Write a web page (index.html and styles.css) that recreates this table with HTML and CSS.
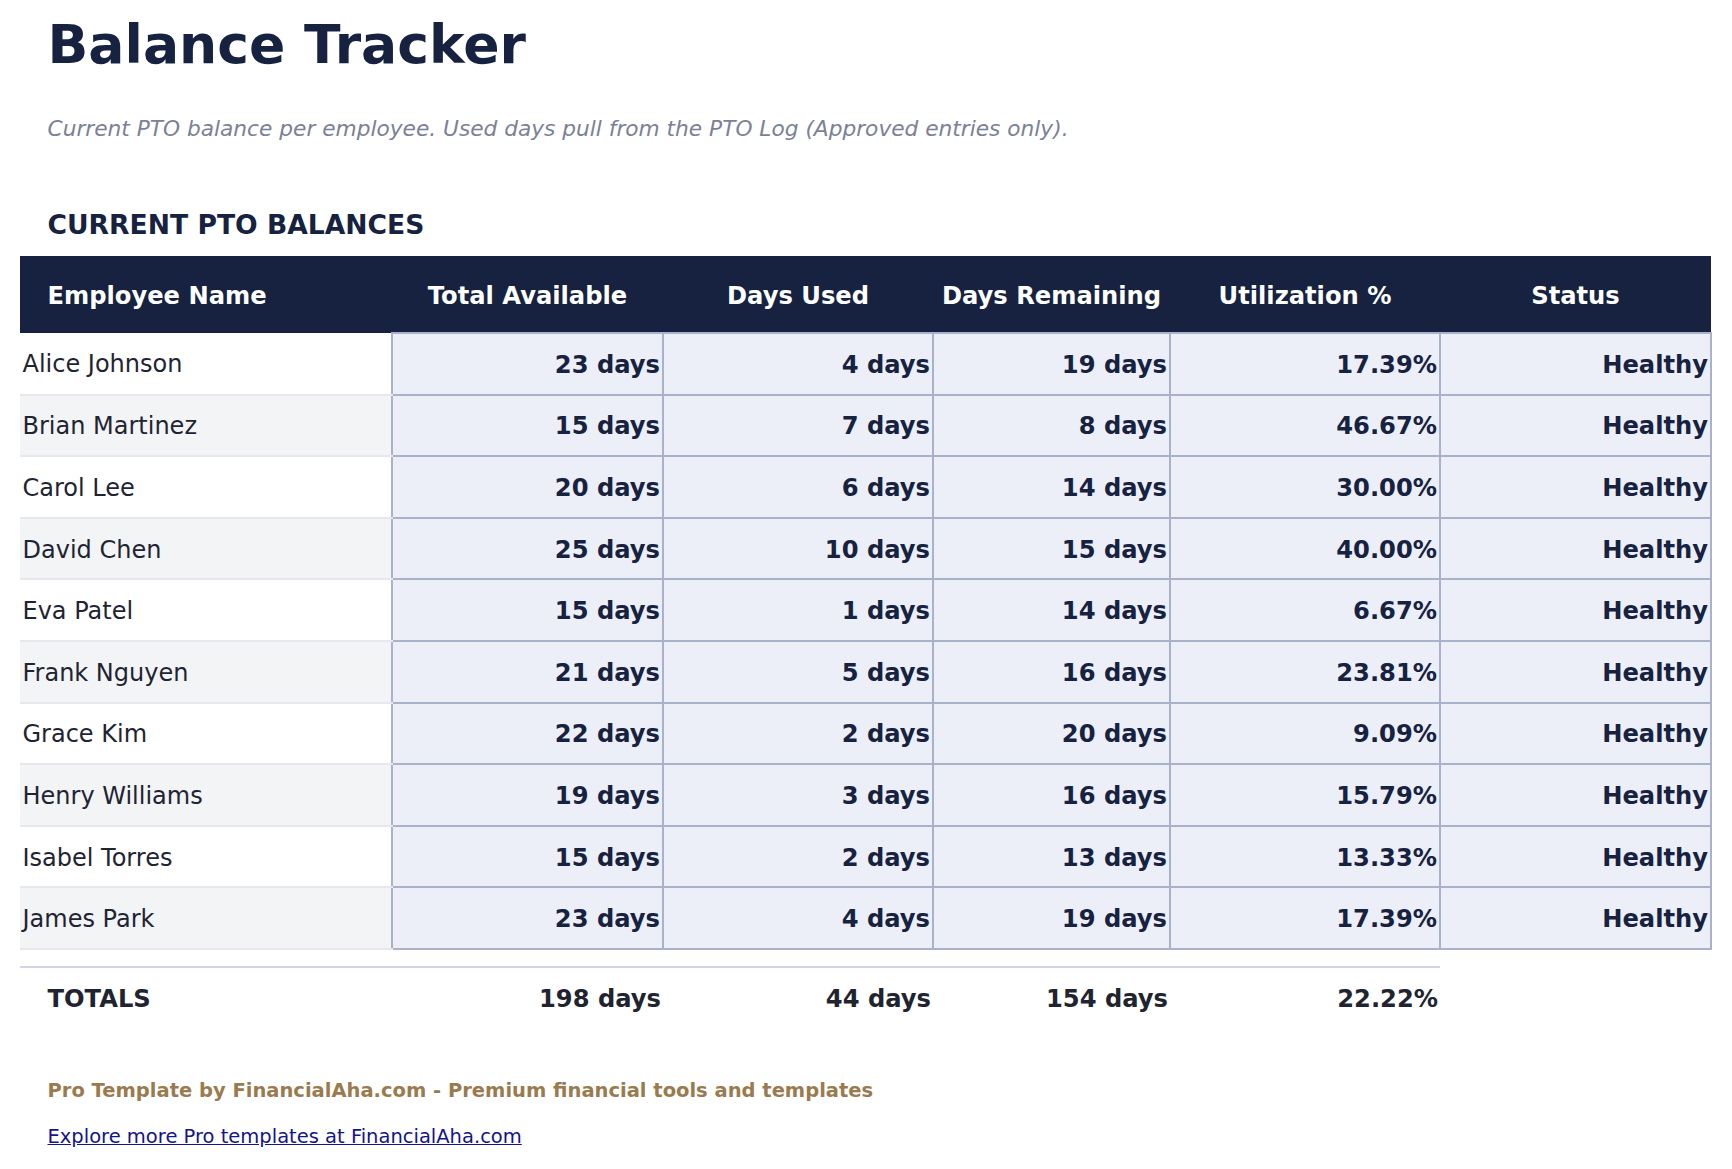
FILE: index.html
```html
<!DOCTYPE html>
<html lang="en">
<head>
<meta charset="utf-8">
<title>Balance Tracker</title>
<link rel="stylesheet" href="styles.css">
</head>
<body>
<div class="page">
  <h1 class="title">Balance Tracker</h1>
  <p class="subtitle">Current PTO balance per employee. Used days pull from the PTO Log (Approved entries only).</p>
  <h2 class="section">CURRENT PTO BALANCES</h2>
  <table class="grid">
    <colgroup>
      <col class="c-name"><col class="c-total"><col class="c-used"><col class="c-rem"><col class="c-util"><col class="c-status">
    </colgroup>
    <thead>
      <tr class="head">
        <th class="h-name">Employee Name</th>
        <th>Total Available</th>
        <th>Days Used</th>
        <th>Days Remaining</th>
        <th>Utilization %</th>
        <th>Status</th>
      </tr>
    </thead>
    <tbody>
      <tr class="row"><td class="name">Alice Johnson</td><td class="num">23 days</td><td class="num">4 days</td><td class="num">19 days</td><td class="num">17.39%</td><td class="num">Healthy</td></tr>
      <tr class="row alt"><td class="name">Brian Martinez</td><td class="num">15 days</td><td class="num">7 days</td><td class="num">8 days</td><td class="num">46.67%</td><td class="num">Healthy</td></tr>
      <tr class="row"><td class="name">Carol Lee</td><td class="num">20 days</td><td class="num">6 days</td><td class="num">14 days</td><td class="num">30.00%</td><td class="num">Healthy</td></tr>
      <tr class="row alt"><td class="name">David Chen</td><td class="num">25 days</td><td class="num">10 days</td><td class="num">15 days</td><td class="num">40.00%</td><td class="num">Healthy</td></tr>
      <tr class="row"><td class="name">Eva Patel</td><td class="num">15 days</td><td class="num">1 days</td><td class="num">14 days</td><td class="num">6.67%</td><td class="num">Healthy</td></tr>
      <tr class="row alt"><td class="name">Frank Nguyen</td><td class="num">21 days</td><td class="num">5 days</td><td class="num">16 days</td><td class="num">23.81%</td><td class="num">Healthy</td></tr>
      <tr class="row"><td class="name">Grace Kim</td><td class="num">22 days</td><td class="num">2 days</td><td class="num">20 days</td><td class="num">9.09%</td><td class="num">Healthy</td></tr>
      <tr class="row alt"><td class="name">Henry Williams</td><td class="num">19 days</td><td class="num">3 days</td><td class="num">16 days</td><td class="num">15.79%</td><td class="num">Healthy</td></tr>
      <tr class="row"><td class="name">Isabel Torres</td><td class="num">15 days</td><td class="num">2 days</td><td class="num">13 days</td><td class="num">13.33%</td><td class="num">Healthy</td></tr>
      <tr class="row alt"><td class="name">James Park</td><td class="num">23 days</td><td class="num">4 days</td><td class="num">19 days</td><td class="num">17.39%</td><td class="num">Healthy</td></tr>
    </tbody>
    <tfoot>
      <tr class="spacer"><td colspan="6"></td></tr>
      <tr class="totals">
        <td class="t-label">TOTALS</td>
        <td class="t-num">198 days</td>
        <td class="t-num">44 days</td>
        <td class="t-num">154 days</td>
        <td class="t-num">22.22%</td>
        <td class="t-empty"></td>
      </tr>
    </tfoot>
  </table>
  <p class="promo">Pro Template by FinancialAha.com - Premium financial tools and templates</p>
  <p class="more"><a href="#" class="more-link">Explore more Pro templates at FinancialAha.com</a></p>
</div>
</body>
</html>
```

FILE: styles.css
```css
html, body {
  margin: 0;
  padding: 0;
  background: #ffffff;
}

body {
  font-family: "DejaVu Sans", Verdana, sans-serif;
  font-size: 24px;
  color: #1f2433;
}

.page {
  padding: 14px 21px 30px 20px;
}

.title {
  margin: 0;
  padding-left: 27.5px;
  font-size: 53.6px;
  line-height: 62px;
  font-weight: bold;
  color: #16223f;
}

.subtitle {
  margin: 40px 0 0;
  padding-left: 27.5px;
  font-size: 21.7px;
  line-height: 25px;
  font-style: italic;
  color: #7b8196;
}

.section {
  margin: 68px 0 0;
  padding-left: 27.5px;
  font-size: 26.6px;
  line-height: 31px;
  font-weight: bold;
  color: #16223f;
}

.grid {
  margin-top: 15.5px;
  width: 1691px;
  table-layout: fixed;
  border-collapse: collapse;
}

.c-name { width: 372px; }
.c-total { width: 271px; }
.c-used { width: 270px; }
.c-rem { width: 237px; }
.c-util { width: 270px; }
.c-status { width: 271px; }

.head {
  height: 77.6px;
  background: #162240;
}

.head th {
  color: #ffffff;
  font-weight: bold;
  font-size: 24.2px;
  text-align: center;
  padding: 4px 0 0;
}

.head .h-name {
  text-align: left;
  padding-left: 27.5px;
}

.row {
  height: 61.6px;
}

.row td {
  padding-top: 2px;
}

.name {
  padding: 0 2.5px;
  background: #ffffff;
  border-bottom: 2px solid #e6e8ee;
  color: #1f2433;
}

.alt .name {
  background: #f3f4f6;
}

.num {
  padding: 0 2px;
  text-align: right;
  font-weight: bold;
  font-size: 24.2px;
  color: #16223f;
  background: #eceff7;
  border: 2px solid #aab1ca;
}

.spacer {
  height: 18px;
}

.spacer td {
  padding: 0;
}

.totals {
  height: 61.6px;
}

.totals td {
  border-top: 2px solid #d3d6de;
  padding-top: 2px;
  font-weight: bold;
  font-size: 24.2px;
  color: #1f2430;
}

.t-label {
  padding-left: 27.5px;
}

.t-num {
  text-align: right;
  padding-left: 2px;
  padding-right: 2px;
}

.totals .t-empty {
  border-top: none;
}

.promo {
  margin: 51px 0 0;
  padding-left: 27.5px;
  font-size: 19.5px;
  line-height: 22px;
  font-weight: bold;
  color: #9a7b4f;
}

.more {
  margin: 24px 0 0;
  padding-left: 27.5px;
  font-size: 19.5px;
  line-height: 22px;
}

.more-link {
  color: #14148c;
  text-decoration: underline;
}
```
